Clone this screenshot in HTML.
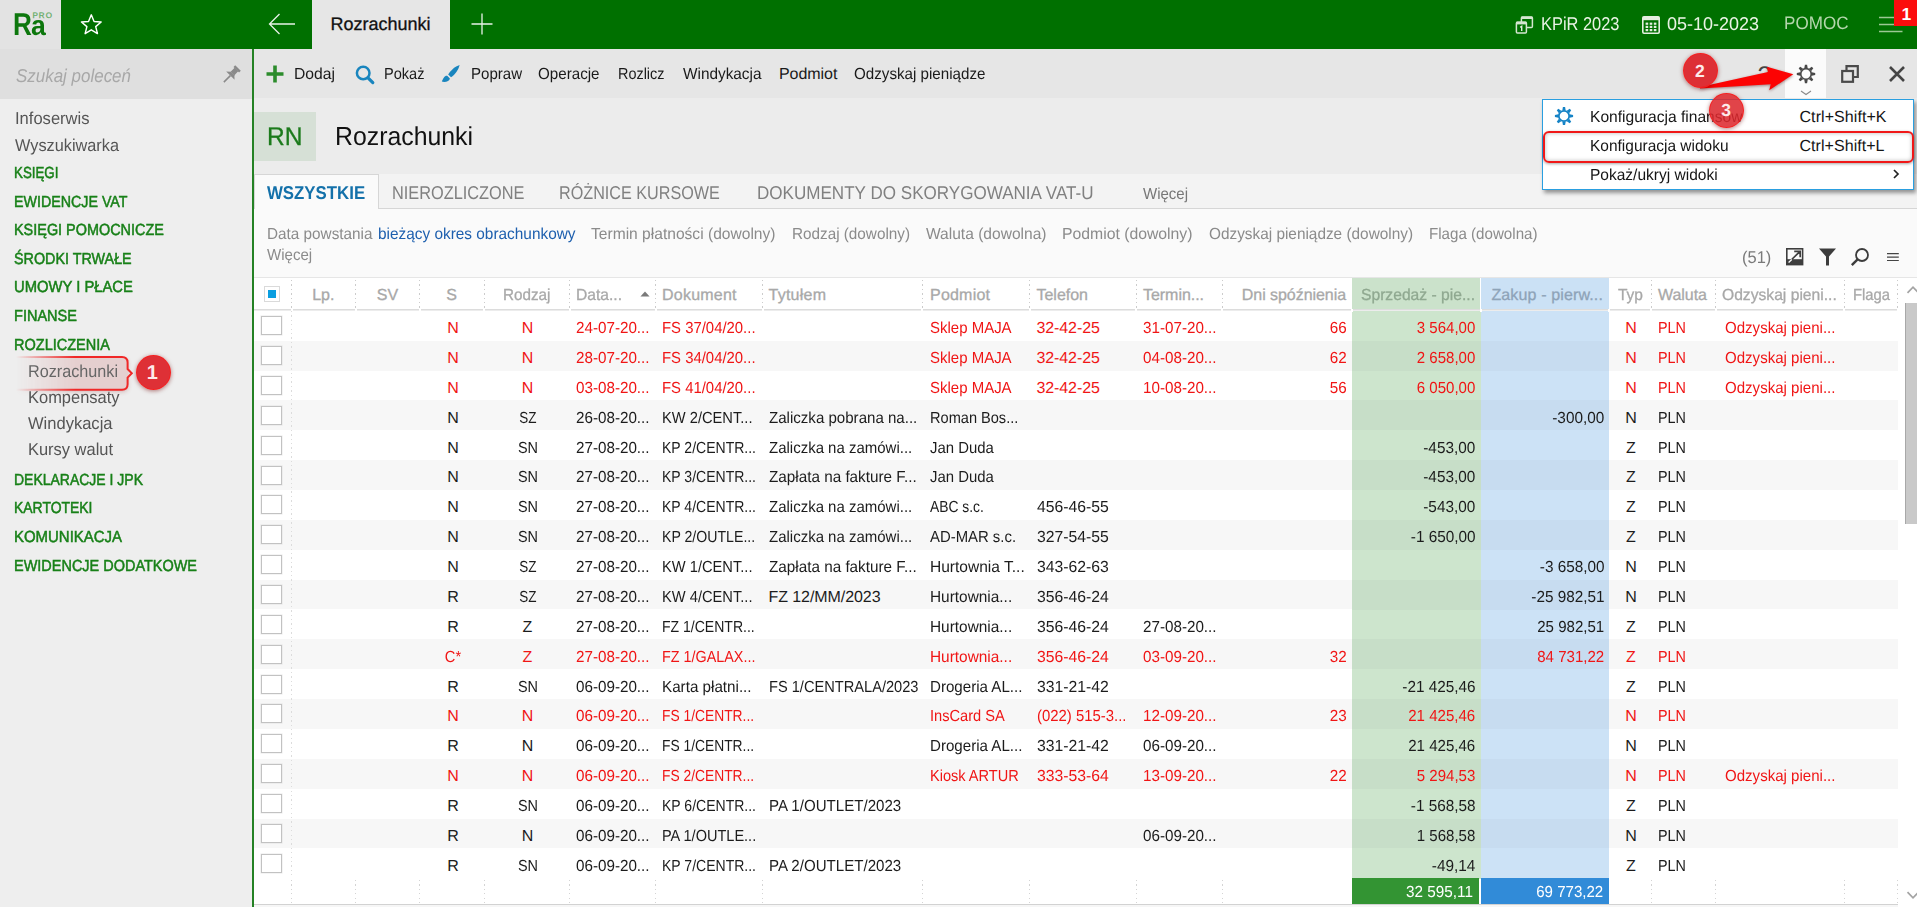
<!DOCTYPE html>
<html lang="pl"><head><meta charset="utf-8"><title>Rozrachunki</title>
<style>
html,body{margin:0;padding:0;}
body{width:1917px;height:907px;overflow:hidden;position:relative;background:#fff;font-family:"Liberation Sans", sans-serif;}
.L div{position:absolute;}
.L svg{position:absolute;overflow:visible;}
.t{position:absolute;white-space:nowrap;line-height:1;text-rendering:geometricPrecision;}
.L{position:absolute;left:0;top:0;width:1917px;height:907px;}
</style></head><body>
<div class="L">
<div style="left:0px;top:0px;width:1917px;height:49px;background:#007000;"></div>
<div style="left:0px;top:0px;width:61px;height:49px;background:#e3e3e3;"></div>
<div style="left:312px;top:0px;width:138px;height:49px;background:#e6e6e6;"></div>
<div style="left:0px;top:49px;width:252px;height:858px;background:#eeeeee;"></div>
<div style="left:0px;top:49px;width:252px;height:49.5px;background:#dfdfdf;"></div>
<div style="left:252px;top:49px;width:2px;height:858px;background:#258225;"></div>
<div style="left:254px;top:49px;width:1663px;height:49px;background:#e6e6e6;"></div>
<div style="left:254px;top:98px;width:1663px;height:76.5px;background:#ececec;"></div>
<div style="left:254px;top:112px;width:61.5px;height:48.5px;background:#d6e0d6;"></div>
<div style="left:254px;top:174px;width:1663px;height:34px;background:#f3f3f3;"></div>
<div style="left:254px;top:174px;width:123px;height:35px;background:#fafafa;border:1px solid #d6d6d6;border-bottom:none;box-sizing:content-box;"></div>
<div style="left:377.5px;top:207.5px;width:1540px;height:1.5px;background:#d6d6d6;"></div>
<div style="left:254px;top:209px;width:1663px;height:68.5px;background:#fafafa;"></div>
<div style="left:254px;top:277px;width:1663px;height:1px;background:#e6e6e6;"></div>
<div style="left:254px;top:277.5px;width:1663px;height:630px;background:#ffffff;"></div>
<svg style="left:80px;top:12.800px" width="22.600" height="22.600" viewBox="0 0 22 22"><path d="M11 1.8 L13.7 8.3 L20.6 8.8 L15.3 13.3 L17 20.1 L11 16.4 L5 20.1 L6.7 13.3 L1.4 8.8 L8.3 8.3 Z" fill="none" stroke="#fff" stroke-width="1.4" stroke-linejoin="round"/></svg>
<svg style="left:268px;top:13px" width="28" height="22" viewBox="0 0 28 22"><path d="M1.5 11 H27 M11.5 1 L1.5 11 L11.5 21" fill="none" stroke="#e8f2e8" stroke-width="1.3"/></svg>
<svg style="left:471px;top:13px" width="22" height="22" viewBox="0 0 22 22"><path d="M11 0.5 V21.5 M0.5 11 H21.5" fill="none" stroke="#e8f2e8" stroke-width="1.3"/></svg>
<svg style="left:1515px;top:16px" width="19" height="18" viewBox="0 0 19 18"><rect x="6.4" y="1.100" width="11" height="10.400" rx="1" fill="none" stroke="#d4e6d0" stroke-width="1.500"/><rect x="6.4" y="0.600" width="11" height="2.400" fill="#d4e6d0"/><rect x="1.4" y="6.2" width="10" height="10.800" rx="1" fill="#007000" stroke="#d4e6d0" stroke-width="1.500"/><rect x="1.4" y="5.600" width="10" height="2.800" fill="#d4e6d0"/><path d="M5.200 11.400 L6.700 10.300 V15" fill="none" stroke="#e4efe0" stroke-width="1.400"/></svg>
<svg style="left:1642px;top:15.5px" width="18" height="18" viewBox="0 0 18 18"><rect x="0.8" y="0.8" width="16.4" height="16.4" rx="1.2" fill="none" stroke="#e4efe0" stroke-width="1.6"/><rect x="0.8" y="0.8" width="16.4" height="3.4" fill="#e4efe0"/><g fill="#e4efe0"><rect x="3.6" y="6.6" width="2.6" height="2.2"/><rect x="7.7" y="6.6" width="2.6" height="2.2"/><rect x="11.8" y="6.6" width="2.6" height="2.2"/><rect x="3.6" y="9.8" width="2.6" height="2.2"/><rect x="7.7" y="9.8" width="2.6" height="2.2"/><rect x="11.8" y="9.8" width="2.6" height="2.2"/><rect x="3.6" y="13" width="2.6" height="2.2"/><rect x="7.7" y="13" width="2.6" height="2.2"/><rect x="11.8" y="13" width="2.6" height="2.2"/></g></svg>
<svg style="left:1878.5px;top:15px" width="24" height="18" viewBox="0 0 24 18"><path d="M0 2.5 H23.5 M0 9.5 H23.5 M0 16.5 H23.5" fill="none" stroke="#9cc894" stroke-width="1.3"/></svg>
<div style="left:1894px;top:0px;width:23px;height:26px;background:#fb0d0d;"></div>
<svg style="left:231.200px;top:75.100px" width="1" height="1" viewBox="0 0 1 1"><g transform="rotate(45) scale(1.1)" fill="#8a8a8a"><rect x="-3.6" y="-9" width="7.200" height="2.200"/><rect x="-2.3" y="-7" width="4.600" height="5.200"/><path d="M-2.3 -2 L-5.400 0.800 H5.400 L2.300 -2 Z"/><rect x="-0.700" y="0.800" width="1.400" height="8.400"/></g></svg>
<svg style="left:266px;top:64.5px" width="18" height="18" viewBox="0 0 18 18"><path d="M9 0.5 V17.5 M0.5 9 H17.5" fill="none" stroke="#2c8c2c" stroke-width="3.6"/></svg>
<svg style="left:354.5px;top:64.5px" width="20" height="19" viewBox="0 0 20 19"><circle cx="8.2" cy="8" r="6.3" fill="none" stroke="#1985be" stroke-width="2.5"/><path d="M13 12.800 L17.800 17.600" stroke="#1985be" stroke-width="3.2" stroke-linecap="round"/></svg>
<svg style="left:441px;top:64px" width="20" height="20" viewBox="0 0 20 20"><path d="M18.6 1 C14 2.5 9.5 6.5 7.2 10.6 L10 13.300 C14 10.500 17.5 6 18.6 1 Z" fill="#1985be"/><path d="M6.2 11.800 C3.2 11.600 2.6 14.2 0.8 17.600 C4.6 18.600 8.6 17 8.9 14.4 Z" fill="#1985be"/></svg>
<div style="left:1785px;top:49px;width:41px;height:49px;background:#fbfbfb;"></div>
<svg style="left:1841px;top:65px" width="18" height="18" viewBox="0 0 18 18"><path d="M5.5 5 V1.200 H16.800 V12 H12.500" fill="none" stroke="#4a4a4a" stroke-width="2.2"/><rect x="1.2" y="6" width="10.8" height="10.8" fill="none" stroke="#4a4a4a" stroke-width="2.2"/></svg>
<svg style="left:1889px;top:66px" width="16" height="16" viewBox="0 0 16 16"><path d="M1 1 L15 15 M15 1 L1 15" fill="none" stroke="#444" stroke-width="2.600"/></svg>
<svg style="left:1805.7px;top:74.2px" width="1" height="1" viewBox="0 0 1 1"><g fill="none" stroke="#484848" stroke-width="1.7"><circle cx="0" cy="0" r="5.3"/></g><g fill="#484848"><path transform="rotate(0)" d="M-1.7 -5.8 L-1.100 -9.2 L1.100 -9.2 L1.700 -5.8 Z"/><path transform="rotate(45)" d="M-1.7 -5.8 L-1.100 -9.2 L1.100 -9.2 L1.700 -5.8 Z"/><path transform="rotate(90)" d="M-1.7 -5.8 L-1.100 -9.2 L1.100 -9.2 L1.700 -5.8 Z"/><path transform="rotate(135)" d="M-1.7 -5.8 L-1.100 -9.2 L1.100 -9.2 L1.700 -5.8 Z"/><path transform="rotate(180)" d="M-1.7 -5.8 L-1.100 -9.2 L1.100 -9.2 L1.700 -5.8 Z"/><path transform="rotate(225)" d="M-1.7 -5.8 L-1.100 -9.2 L1.100 -9.2 L1.700 -5.8 Z"/><path transform="rotate(270)" d="M-1.7 -5.8 L-1.100 -9.2 L1.100 -9.2 L1.700 -5.8 Z"/><path transform="rotate(315)" d="M-1.7 -5.8 L-1.100 -9.2 L1.100 -9.2 L1.700 -5.8 Z"/></g></svg>
<svg style="left:1800px;top:90px" width="12" height="6" viewBox="0 0 12 6"><path d="M1 1 L6 4.500 L11 1" fill="none" stroke="#8a8a8a" stroke-width="1.1"/></svg>
<svg style="left:1785.800px;top:248px" width="17.400" height="17.400" viewBox="0 0 17.400 17.400"><rect x="0.8" y="0.8" width="15.800" height="15.800" fill="#fafafa" stroke="#3e3e3e" stroke-width="1.600"/><rect x="0.8" y="11.200" width="15.800" height="5.400" fill="#3e3e3e"/><path d="M5.200 12 L14 3.400 M8.200 3.300 H14.200 V9.300" fill="none" stroke="#3e3e3e" stroke-width="1.700"/><path d="M2.600 14.600 L5.800 11.600" stroke="#fafafa" stroke-width="1.300"/></svg>
<svg style="left:1818.5px;top:248px" width="17" height="18" viewBox="0 0 17 18"><path d="M0 0.5 H17 L10 8.5 V17.500 H7 V8.5 Z" fill="#3c3c3c"/></svg>
<svg style="left:1850.5px;top:247.5px" width="18" height="18" viewBox="0 0 18 18"><circle cx="11" cy="7" r="6" fill="none" stroke="#3c3c3c" stroke-width="1.800"/><path d="M6.6 11.400 L0.800 17.200" stroke="#3c3c3c" stroke-width="2.4"/></svg>
<svg style="left:1887px;top:253px" width="12" height="9" viewBox="0 0 12 9"><path d="M0 0.600 H11.800 M0 4.100 H11.800 M0 7.500 H11.800" stroke="#444" stroke-width="1.200"/></svg>
<div style="left:254px;top:340.76px;width:1643.5px;height:29.86px;background:#f7f7f7;"></div>
<div style="left:254px;top:400.48px;width:1643.5px;height:29.86px;background:#f7f7f7;"></div>
<div style="left:254px;top:460.2px;width:1643.5px;height:29.86px;background:#f7f7f7;"></div>
<div style="left:254px;top:519.92px;width:1643.5px;height:29.86px;background:#f7f7f7;"></div>
<div style="left:254px;top:579.64px;width:1643.5px;height:29.86px;background:#f7f7f7;"></div>
<div style="left:254px;top:639.36px;width:1643.5px;height:29.86px;background:#f7f7f7;"></div>
<div style="left:254px;top:699.08px;width:1643.5px;height:29.86px;background:#f7f7f7;"></div>
<div style="left:254px;top:758.8px;width:1643.5px;height:29.86px;background:#f7f7f7;"></div>
<div style="left:254px;top:818.52px;width:1643.5px;height:29.86px;background:#f7f7f7;"></div>
<div style="left:1352px;top:277.5px;width:128px;height:33.5px;background:#cbe2cb;"></div>
<div style="left:1481px;top:277.5px;width:127.5px;height:33.5px;background:#cbe1f5;"></div>
<div style="left:1352px;top:310.9px;width:128.5px;height:30.259999999999998px;background:#cde5cd;"></div>
<div style="left:1480.5px;top:310.9px;width:128.5px;height:30.259999999999998px;background:#cce2f6;"></div>
<div style="left:1352px;top:340.76px;width:128.5px;height:30.259999999999998px;background:#c7dec8;"></div>
<div style="left:1480.5px;top:340.76px;width:128.5px;height:30.259999999999998px;background:#c7dcf0;"></div>
<div style="left:1352px;top:370.62px;width:128.5px;height:30.259999999999998px;background:#cde5cd;"></div>
<div style="left:1480.5px;top:370.62px;width:128.5px;height:30.259999999999998px;background:#cce2f6;"></div>
<div style="left:1352px;top:400.48px;width:128.5px;height:30.259999999999998px;background:#c7dec8;"></div>
<div style="left:1480.5px;top:400.48px;width:128.5px;height:30.259999999999998px;background:#c7dcf0;"></div>
<div style="left:1352px;top:430.34px;width:128.5px;height:30.259999999999998px;background:#cde5cd;"></div>
<div style="left:1480.5px;top:430.34px;width:128.5px;height:30.259999999999998px;background:#cce2f6;"></div>
<div style="left:1352px;top:460.2px;width:128.5px;height:30.259999999999998px;background:#c7dec8;"></div>
<div style="left:1480.5px;top:460.2px;width:128.5px;height:30.259999999999998px;background:#c7dcf0;"></div>
<div style="left:1352px;top:490.06px;width:128.5px;height:30.259999999999998px;background:#cde5cd;"></div>
<div style="left:1480.5px;top:490.06px;width:128.5px;height:30.259999999999998px;background:#cce2f6;"></div>
<div style="left:1352px;top:519.92px;width:128.5px;height:30.259999999999998px;background:#c7dec8;"></div>
<div style="left:1480.5px;top:519.92px;width:128.5px;height:30.259999999999998px;background:#c7dcf0;"></div>
<div style="left:1352px;top:549.78px;width:128.5px;height:30.259999999999998px;background:#cde5cd;"></div>
<div style="left:1480.5px;top:549.78px;width:128.5px;height:30.259999999999998px;background:#cce2f6;"></div>
<div style="left:1352px;top:579.64px;width:128.5px;height:30.259999999999998px;background:#c7dec8;"></div>
<div style="left:1480.5px;top:579.64px;width:128.5px;height:30.259999999999998px;background:#c7dcf0;"></div>
<div style="left:1352px;top:609.5px;width:128.5px;height:30.259999999999998px;background:#cde5cd;"></div>
<div style="left:1480.5px;top:609.5px;width:128.5px;height:30.259999999999998px;background:#cce2f6;"></div>
<div style="left:1352px;top:639.36px;width:128.5px;height:30.259999999999998px;background:#c7dec8;"></div>
<div style="left:1480.5px;top:639.36px;width:128.5px;height:30.259999999999998px;background:#c7dcf0;"></div>
<div style="left:1352px;top:669.22px;width:128.5px;height:30.259999999999998px;background:#cde5cd;"></div>
<div style="left:1480.5px;top:669.22px;width:128.5px;height:30.259999999999998px;background:#cce2f6;"></div>
<div style="left:1352px;top:699.08px;width:128.5px;height:30.259999999999998px;background:#c7dec8;"></div>
<div style="left:1480.5px;top:699.08px;width:128.5px;height:30.259999999999998px;background:#c7dcf0;"></div>
<div style="left:1352px;top:728.94px;width:128.5px;height:30.259999999999998px;background:#cde5cd;"></div>
<div style="left:1480.5px;top:728.94px;width:128.5px;height:30.259999999999998px;background:#cce2f6;"></div>
<div style="left:1352px;top:758.8px;width:128.5px;height:30.259999999999998px;background:#c7dec8;"></div>
<div style="left:1480.5px;top:758.8px;width:128.5px;height:30.259999999999998px;background:#c7dcf0;"></div>
<div style="left:1352px;top:788.66px;width:128.5px;height:30.259999999999998px;background:#cde5cd;"></div>
<div style="left:1480.5px;top:788.66px;width:128.5px;height:30.259999999999998px;background:#cce2f6;"></div>
<div style="left:1352px;top:818.52px;width:128.5px;height:30.259999999999998px;background:#c7dec8;"></div>
<div style="left:1480.5px;top:818.52px;width:128.5px;height:30.259999999999998px;background:#c7dcf0;"></div>
<div style="left:1352px;top:848.38px;width:128.5px;height:30.259999999999998px;background:#cde5cd;"></div>
<div style="left:1480.5px;top:848.38px;width:128.5px;height:30.259999999999998px;background:#cce2f6;"></div>
<div style="left:254px;top:308.5px;width:1643.5px;height:1.5px;background:#dcdcdc;"></div>
<div style="left:254px;top:310px;width:1643.5px;height:1.2px;background:#ececec;"></div>
<div style="left:291px;top:280px;width:1px;height:29px;background:repeating-linear-gradient(180deg,#cccccc 0,#cccccc 1.3px,transparent 1.3px,transparent 4.4px);"></div>
<div style="left:291px;top:880px;width:1px;height:24px;background:repeating-linear-gradient(180deg,#d4d4d4 0,#d4d4d4 1.3px,transparent 1.3px,transparent 4.4px);"></div>
<div style="left:355px;top:280px;width:1px;height:29px;background:repeating-linear-gradient(180deg,#cccccc 0,#cccccc 1.3px,transparent 1.3px,transparent 4.4px);"></div>
<div style="left:355px;top:880px;width:1px;height:24px;background:repeating-linear-gradient(180deg,#d4d4d4 0,#d4d4d4 1.3px,transparent 1.3px,transparent 4.4px);"></div>
<div style="left:419px;top:280px;width:1px;height:29px;background:repeating-linear-gradient(180deg,#cccccc 0,#cccccc 1.3px,transparent 1.3px,transparent 4.4px);"></div>
<div style="left:419px;top:880px;width:1px;height:24px;background:repeating-linear-gradient(180deg,#d4d4d4 0,#d4d4d4 1.3px,transparent 1.3px,transparent 4.4px);"></div>
<div style="left:484px;top:280px;width:1px;height:29px;background:repeating-linear-gradient(180deg,#cccccc 0,#cccccc 1.3px,transparent 1.3px,transparent 4.4px);"></div>
<div style="left:484px;top:880px;width:1px;height:24px;background:repeating-linear-gradient(180deg,#d4d4d4 0,#d4d4d4 1.3px,transparent 1.3px,transparent 4.4px);"></div>
<div style="left:569px;top:280px;width:1px;height:29px;background:repeating-linear-gradient(180deg,#cccccc 0,#cccccc 1.3px,transparent 1.3px,transparent 4.4px);"></div>
<div style="left:569px;top:880px;width:1px;height:24px;background:repeating-linear-gradient(180deg,#d4d4d4 0,#d4d4d4 1.3px,transparent 1.3px,transparent 4.4px);"></div>
<div style="left:655px;top:280px;width:1px;height:29px;background:repeating-linear-gradient(180deg,#cccccc 0,#cccccc 1.3px,transparent 1.3px,transparent 4.4px);"></div>
<div style="left:655px;top:880px;width:1px;height:24px;background:repeating-linear-gradient(180deg,#d4d4d4 0,#d4d4d4 1.3px,transparent 1.3px,transparent 4.4px);"></div>
<div style="left:762px;top:280px;width:1px;height:29px;background:repeating-linear-gradient(180deg,#cccccc 0,#cccccc 1.3px,transparent 1.3px,transparent 4.4px);"></div>
<div style="left:762px;top:880px;width:1px;height:24px;background:repeating-linear-gradient(180deg,#d4d4d4 0,#d4d4d4 1.3px,transparent 1.3px,transparent 4.4px);"></div>
<div style="left:922px;top:280px;width:1px;height:29px;background:repeating-linear-gradient(180deg,#cccccc 0,#cccccc 1.3px,transparent 1.3px,transparent 4.4px);"></div>
<div style="left:922px;top:880px;width:1px;height:24px;background:repeating-linear-gradient(180deg,#d4d4d4 0,#d4d4d4 1.3px,transparent 1.3px,transparent 4.4px);"></div>
<div style="left:1029px;top:280px;width:1px;height:29px;background:repeating-linear-gradient(180deg,#cccccc 0,#cccccc 1.3px,transparent 1.3px,transparent 4.4px);"></div>
<div style="left:1029px;top:880px;width:1px;height:24px;background:repeating-linear-gradient(180deg,#d4d4d4 0,#d4d4d4 1.3px,transparent 1.3px,transparent 4.4px);"></div>
<div style="left:1136px;top:280px;width:1px;height:29px;background:repeating-linear-gradient(180deg,#cccccc 0,#cccccc 1.3px,transparent 1.3px,transparent 4.4px);"></div>
<div style="left:1136px;top:880px;width:1px;height:24px;background:repeating-linear-gradient(180deg,#d4d4d4 0,#d4d4d4 1.3px,transparent 1.3px,transparent 4.4px);"></div>
<div style="left:1222px;top:280px;width:1px;height:29px;background:repeating-linear-gradient(180deg,#cccccc 0,#cccccc 1.3px,transparent 1.3px,transparent 4.4px);"></div>
<div style="left:1222px;top:880px;width:1px;height:24px;background:repeating-linear-gradient(180deg,#d4d4d4 0,#d4d4d4 1.3px,transparent 1.3px,transparent 4.4px);"></div>
<div style="left:1651px;top:280px;width:1px;height:29px;background:repeating-linear-gradient(180deg,#cccccc 0,#cccccc 1.3px,transparent 1.3px,transparent 4.4px);"></div>
<div style="left:1651px;top:880px;width:1px;height:24px;background:repeating-linear-gradient(180deg,#d4d4d4 0,#d4d4d4 1.3px,transparent 1.3px,transparent 4.4px);"></div>
<div style="left:1715px;top:280px;width:1px;height:29px;background:repeating-linear-gradient(180deg,#cccccc 0,#cccccc 1.3px,transparent 1.3px,transparent 4.4px);"></div>
<div style="left:1715px;top:880px;width:1px;height:24px;background:repeating-linear-gradient(180deg,#d4d4d4 0,#d4d4d4 1.3px,transparent 1.3px,transparent 4.4px);"></div>
<div style="left:1844px;top:280px;width:1px;height:29px;background:repeating-linear-gradient(180deg,#cccccc 0,#cccccc 1.3px,transparent 1.3px,transparent 4.4px);"></div>
<div style="left:1844px;top:880px;width:1px;height:24px;background:repeating-linear-gradient(180deg,#d4d4d4 0,#d4d4d4 1.3px,transparent 1.3px,transparent 4.4px);"></div>
<div style="left:1897px;top:280px;width:1px;height:29px;background:repeating-linear-gradient(180deg,#cccccc 0,#cccccc 1.3px,transparent 1.3px,transparent 4.4px);"></div>
<div style="left:1897px;top:880px;width:1px;height:24px;background:repeating-linear-gradient(180deg,#d4d4d4 0,#d4d4d4 1.3px,transparent 1.3px,transparent 4.4px);"></div>
<div style="left:290.7px;top:308.5px;width:2px;height:3px;background:#ffffff;"></div>
<div style="left:354.5px;top:308.5px;width:2px;height:3px;background:#ffffff;"></div>
<div style="left:418.6px;top:308.5px;width:2px;height:3px;background:#ffffff;"></div>
<div style="left:483.4px;top:308.5px;width:2px;height:3px;background:#ffffff;"></div>
<div style="left:568.9px;top:308.5px;width:2px;height:3px;background:#ffffff;"></div>
<div style="left:654.7px;top:308.5px;width:2px;height:3px;background:#ffffff;"></div>
<div style="left:761.5px;top:308.5px;width:2px;height:3px;background:#ffffff;"></div>
<div style="left:921.3px;top:308.5px;width:2px;height:3px;background:#ffffff;"></div>
<div style="left:1028.5px;top:308.5px;width:2px;height:3px;background:#ffffff;"></div>
<div style="left:1135.3px;top:308.5px;width:2px;height:3px;background:#ffffff;"></div>
<div style="left:1221.3px;top:308.5px;width:2px;height:3px;background:#ffffff;"></div>
<div style="left:1650.3px;top:308.5px;width:2px;height:3px;background:#ffffff;"></div>
<div style="left:1714.5px;top:308.5px;width:2px;height:3px;background:#ffffff;"></div>
<div style="left:1843px;top:308.5px;width:2px;height:3px;background:#ffffff;"></div>
<div style="left:1896.5px;top:308.5px;width:2px;height:3px;background:#ffffff;"></div>
<div style="left:1351px;top:308.5px;width:2px;height:3px;background:#ffffff;"></div>
<div style="left:1479.5px;top:308.5px;width:2px;height:3px;background:#ffffff;"></div>
<div style="left:1607.5px;top:308.5px;width:2px;height:3px;background:#ffffff;"></div>
<div style="left:291px;top:311px;width:1px;height:568px;background:repeating-linear-gradient(180deg,#dcdcdc 0,#dcdcdc 1.3px,transparent 1.3px,transparent 4.4px);"></div>
<div style="left:264px;top:286px;width:14px;height:14px;border:1px solid #dadada;background:#fff;"></div>
<div style="left:268px;top:290px;width:8px;height:8px;background:#0a9ee0;"></div>
<div style="left:261px;top:316px;width:19px;height:17px;border:1px solid #c2c2c2;background:#fff;box-shadow:0 0 0 0.5px rgba(190,190,190,0.35);"></div>
<div style="left:261px;top:346px;width:19px;height:17px;border:1px solid #c2c2c2;background:#fff;box-shadow:0 0 0 0.5px rgba(190,190,190,0.35);"></div>
<div style="left:261px;top:376px;width:19px;height:17px;border:1px solid #c2c2c2;background:#fff;box-shadow:0 0 0 0.5px rgba(190,190,190,0.35);"></div>
<div style="left:261px;top:406px;width:19px;height:17px;border:1px solid #c2c2c2;background:#fff;box-shadow:0 0 0 0.5px rgba(190,190,190,0.35);"></div>
<div style="left:261px;top:436px;width:19px;height:17px;border:1px solid #c2c2c2;background:#fff;box-shadow:0 0 0 0.5px rgba(190,190,190,0.35);"></div>
<div style="left:261px;top:466px;width:19px;height:17px;border:1px solid #c2c2c2;background:#fff;box-shadow:0 0 0 0.5px rgba(190,190,190,0.35);"></div>
<div style="left:261px;top:495px;width:19px;height:17px;border:1px solid #c2c2c2;background:#fff;box-shadow:0 0 0 0.5px rgba(190,190,190,0.35);"></div>
<div style="left:261px;top:525px;width:19px;height:17px;border:1px solid #c2c2c2;background:#fff;box-shadow:0 0 0 0.5px rgba(190,190,190,0.35);"></div>
<div style="left:261px;top:555px;width:19px;height:17px;border:1px solid #c2c2c2;background:#fff;box-shadow:0 0 0 0.5px rgba(190,190,190,0.35);"></div>
<div style="left:261px;top:585px;width:19px;height:17px;border:1px solid #c2c2c2;background:#fff;box-shadow:0 0 0 0.5px rgba(190,190,190,0.35);"></div>
<div style="left:261px;top:615px;width:19px;height:17px;border:1px solid #c2c2c2;background:#fff;box-shadow:0 0 0 0.5px rgba(190,190,190,0.35);"></div>
<div style="left:261px;top:645px;width:19px;height:17px;border:1px solid #c2c2c2;background:#fff;box-shadow:0 0 0 0.5px rgba(190,190,190,0.35);"></div>
<div style="left:261px;top:675px;width:19px;height:17px;border:1px solid #c2c2c2;background:#fff;box-shadow:0 0 0 0.5px rgba(190,190,190,0.35);"></div>
<div style="left:261px;top:704px;width:19px;height:17px;border:1px solid #c2c2c2;background:#fff;box-shadow:0 0 0 0.5px rgba(190,190,190,0.35);"></div>
<div style="left:261px;top:734px;width:19px;height:17px;border:1px solid #c2c2c2;background:#fff;box-shadow:0 0 0 0.5px rgba(190,190,190,0.35);"></div>
<div style="left:261px;top:764px;width:19px;height:17px;border:1px solid #c2c2c2;background:#fff;box-shadow:0 0 0 0.5px rgba(190,190,190,0.35);"></div>
<div style="left:261px;top:794px;width:19px;height:17px;border:1px solid #c2c2c2;background:#fff;box-shadow:0 0 0 0.5px rgba(190,190,190,0.35);"></div>
<div style="left:261px;top:824px;width:19px;height:17px;border:1px solid #c2c2c2;background:#fff;box-shadow:0 0 0 0.5px rgba(190,190,190,0.35);"></div>
<div style="left:261px;top:854px;width:19px;height:17px;border:1px solid #c2c2c2;background:#fff;box-shadow:0 0 0 0.5px rgba(190,190,190,0.35);"></div>
<svg style="left:640px;top:291px" width="10" height="5.5" viewBox="0 0 10 6"><path d="M0 6 L5 0.5 L10 6 Z" fill="#7a7a7a"/></svg>
<div style="left:1352px;top:878px;width:127px;height:27px;background:#339433;"></div>
<div style="left:1481px;top:878px;width:127.5px;height:27px;background:#318bd8;"></div>
<div style="left:254px;top:904px;width:1643.5px;height:1px;background:#d2d2d2;"></div>
<div style="left:254px;top:905px;width:1643.5px;height:2px;background:#f6f6f6;"></div>
<div style="left:1899px;top:277.5px;width:18px;height:630px;background:#ffffff;"></div>
<div style="left:1905px;top:302.5px;width:12px;height:221.5px;background:#c9c9c9;border-left:1px solid #a8a8a8;"></div>
<svg style="left:1906.500px;top:285.500px" width="12" height="8" viewBox="0 0 12 8"><path d="M0.5 6.800 L6 1.200 L11.500 6.800" fill="none" stroke="#a4a4a4" stroke-width="1.700"/></svg>
<svg style="left:1906.800px;top:890.500px" width="12" height="8" viewBox="0 0 12 8"><path d="M0.5 1.200 L6 6.800 L11.500 1.200" fill="none" stroke="#a4a4a4" stroke-width="1.700"/></svg>
</div>
<div class="L">
<span class="t" style="font-size:31.5px;font-weight:700;color:#0d770d;top:9px;transform:scaleX(0.83);transform-origin:0 0;left:12.90px;">R</span>
<span class="t" style="font-size:28px;font-weight:700;color:#0d770d;top:12px;transform:scaleX(0.95);transform-origin:0 0;left:31.40px;">a</span>
<span class="t" style="font-size:8px;font-weight:400;letter-spacing:1.128px;color:#62aa62;top:12px;-webkit-text-stroke:0.25px #62aa62;left:32.40px;">PRO</span>
<span class="t" style="font-size:18px;font-weight:400;letter-spacing:-0.005px;color:#111;top:15px;-webkit-text-stroke:0.3px #111;left:330.60px;">Rozrachunki</span>
<span class="t" style="font-size:18.5px;font-weight:400;color:#e9f3e4;top:15px;transform:scaleX(0.8875);transform-origin:0 0;left:1541.00px;">KPiR 2023</span>
<span class="t" style="font-size:18.5px;font-weight:400;color:#e9f3e4;top:15px;transform:scaleX(0.9721);transform-origin:0 0;left:1666.60px;">05-10-2023</span>
<span class="t" style="font-size:18px;font-weight:400;color:#b4d6ac;top:14px;transform:scaleX(0.9483);transform-origin:0 0;left:1783.60px;">POMOC</span>
<span class="t" style="font-size:17.5px;font-weight:700;color:#fff;top:6px;left:1406.30px;width:1000px;text-align:center;">1</span>
<span class="t" style="font-size:18.5px;font-weight:400;font-style:italic;color:#a8a8a8;top:67px;transform:scaleX(0.9164);transform-origin:0 0;left:15.60px;">Szukaj poleceń</span>
<span class="t" style="font-size:17.25px;font-weight:400;color:#555;top:110px;transform:scaleX(0.9594);transform-origin:0 0;left:14.70px;">Infoserwis</span>
<span class="t" style="font-size:17.25px;font-weight:400;color:#555;top:137px;transform:scaleX(0.9448);transform-origin:0 0;left:14.70px;">Wyszukiwarka</span>
<span class="t" style="font-size:16px;font-weight:400;color:#188018;top:166px;-webkit-text-stroke:0.5px #188018;transform:scaleX(0.8321);transform-origin:0 0;left:14.30px;">KSIĘGI</span>
<span class="t" style="font-size:16px;font-weight:400;color:#188018;top:195px;-webkit-text-stroke:0.5px #188018;transform:scaleX(0.8907);transform-origin:0 0;left:14.30px;">EWIDENCJE VAT</span>
<span class="t" style="font-size:16px;font-weight:400;color:#188018;top:223px;-webkit-text-stroke:0.5px #188018;transform:scaleX(0.9017);transform-origin:0 0;left:14.30px;">KSIĘGI POMOCNICZE</span>
<span class="t" style="font-size:16px;font-weight:400;color:#188018;top:252px;-webkit-text-stroke:0.5px #188018;transform:scaleX(0.8964);transform-origin:0 0;left:14.30px;">ŚRODKI TRWAŁE</span>
<span class="t" style="font-size:16px;font-weight:400;color:#188018;top:280px;-webkit-text-stroke:0.5px #188018;transform:scaleX(0.9244);transform-origin:0 0;left:14.30px;">UMOWY I PŁACE</span>
<span class="t" style="font-size:16px;font-weight:400;color:#188018;top:309px;-webkit-text-stroke:0.5px #188018;transform:scaleX(0.9085);transform-origin:0 0;left:14.30px;">FINANSE</span>
<span class="t" style="font-size:16px;font-weight:400;color:#188018;top:338px;-webkit-text-stroke:0.5px #188018;transform:scaleX(0.9074);transform-origin:0 0;left:14.30px;">ROZLICZENIA</span>
<span class="t" style="font-size:17.25px;font-weight:400;color:#555;top:389px;transform:scaleX(0.9542);transform-origin:0 0;left:27.70px;">Kompensaty</span>
<span class="t" style="font-size:17.25px;font-weight:400;color:#555;top:415px;transform:scaleX(0.958);transform-origin:0 0;left:27.70px;">Windykacja</span>
<span class="t" style="font-size:17.25px;font-weight:400;color:#555;top:441px;transform:scaleX(0.9534);transform-origin:0 0;left:27.70px;">Kursy walut</span>
<span class="t" style="font-size:16px;font-weight:400;color:#188018;top:473px;-webkit-text-stroke:0.5px #188018;transform:scaleX(0.8739);transform-origin:0 0;left:14.30px;">DEKLARACJE I JPK</span>
<span class="t" style="font-size:16px;font-weight:400;color:#188018;top:501px;-webkit-text-stroke:0.5px #188018;transform:scaleX(0.8712);transform-origin:0 0;left:14.30px;">KARTOTEKI</span>
<span class="t" style="font-size:16px;font-weight:400;color:#188018;top:530px;-webkit-text-stroke:0.5px #188018;transform:scaleX(0.9344);transform-origin:0 0;left:14.30px;">KOMUNIKACJA</span>
<span class="t" style="font-size:16px;font-weight:400;color:#188018;top:559px;-webkit-text-stroke:0.5px #188018;transform:scaleX(0.9043);transform-origin:0 0;left:14.30px;">EWIDENCJE DODATKOWE</span>
<span class="t" style="font-size:16px;font-weight:400;color:#1a1a1a;top:67px;transform:scaleX(0.9806);transform-origin:0 0;left:294.20px;">Dodaj</span>
<span class="t" style="font-size:16px;font-weight:400;color:#1a1a1a;top:67px;transform:scaleX(0.9108);transform-origin:0 0;left:384.00px;">Pokaż</span>
<span class="t" style="font-size:16px;font-weight:400;color:#1a1a1a;top:67px;transform:scaleX(0.9401);transform-origin:0 0;left:471.00px;">Popraw</span>
<span class="t" style="font-size:16px;font-weight:400;color:#1a1a1a;top:67px;transform:scaleX(0.9473);transform-origin:0 0;left:538.20px;">Operacje</span>
<span class="t" style="font-size:16px;font-weight:400;color:#1a1a1a;top:67px;transform:scaleX(0.9018);transform-origin:0 0;left:618.00px;">Rozlicz</span>
<span class="t" style="font-size:16px;font-weight:400;color:#1a1a1a;top:67px;transform:scaleX(0.9595);transform-origin:0 0;left:682.70px;">Windykacja</span>
<span class="t" style="font-size:16px;font-weight:400;letter-spacing:-0.034px;color:#1a1a1a;top:67px;left:778.90px;">Podmiot</span>
<span class="t" style="font-size:16px;font-weight:400;color:#1a1a1a;top:67px;transform:scaleX(0.9477);transform-origin:0 0;left:854.40px;">Odzyskaj pieniądze</span>
<span class="t" style="font-size:24px;font-weight:400;color:#444;top:64px;left:1264.50px;width:1000px;text-align:center;">?</span>
<span class="t" style="font-size:25.5px;font-weight:400;color:#1b7a1b;top:125px;-webkit-text-stroke:0.3px #1b7a1b;transform:scaleX(0.9635);transform-origin:0 0;left:267.00px;">RN</span>
<span class="t" style="font-size:26px;font-weight:400;color:#111;top:123px;transform:scaleX(0.9549);transform-origin:0 0;left:334.90px;">Rozrachunki</span>
<span class="t" style="font-size:18.5px;font-weight:700;color:#1471aa;top:184px;transform:scaleX(0.909);transform-origin:0 0;left:266.60px;">WSZYSTKIE</span>
<span class="t" style="font-size:18.5px;font-weight:400;color:#808080;top:184px;transform:scaleX(0.8829);transform-origin:0 0;left:391.70px;">NIEROZLICZONE</span>
<span class="t" style="font-size:18.5px;font-weight:400;color:#808080;top:184px;transform:scaleX(0.874);transform-origin:0 0;left:559.30px;">RÓŻNICE KURSOWE</span>
<span class="t" style="font-size:18.5px;font-weight:400;color:#808080;top:184px;transform:scaleX(0.9221);transform-origin:0 0;left:756.60px;">DOKUMENTY DO SKORYGOWANIA VAT-U</span>
<span class="t" style="font-size:16px;font-weight:400;color:#777;top:187px;transform:scaleX(0.9372);transform-origin:0 0;left:1143.20px;">Więcej</span>
<span class="t" style="font-size:16px;font-weight:400;color:#8b8b8b;top:227px;transform:scaleX(0.9565);transform-origin:0 0;left:267.00px;">Data powstania</span>
<span class="t" style="font-size:16px;font-weight:400;color:#1d5fae;top:227px;transform:scaleX(0.9614);transform-origin:0 0;left:377.60px;">bieżący okres obrachunkowy</span>
<span class="t" style="font-size:16px;font-weight:400;color:#8b8b8b;top:227px;transform:scaleX(0.9741);transform-origin:0 0;left:591.00px;">Termin płatności (dowolny)</span>
<span class="t" style="font-size:16px;font-weight:400;color:#8b8b8b;top:227px;transform:scaleX(0.9546);transform-origin:0 0;left:791.90px;">Rodzaj (dowolny)</span>
<span class="t" style="font-size:16px;font-weight:400;color:#8b8b8b;top:227px;transform:scaleX(0.9725);transform-origin:0 0;left:925.80px;">Waluta (dowolna)</span>
<span class="t" style="font-size:16px;font-weight:400;color:#8b8b8b;top:227px;transform:scaleX(0.9849);transform-origin:0 0;left:1062.40px;">Podmiot (dowolny)</span>
<span class="t" style="font-size:16px;font-weight:400;color:#8b8b8b;top:227px;transform:scaleX(0.9598);transform-origin:0 0;left:1209.30px;">Odzyskaj pieniądze (dowolny)</span>
<span class="t" style="font-size:16px;font-weight:400;color:#8b8b8b;top:227px;transform:scaleX(0.9457);transform-origin:0 0;left:1428.90px;">Flaga (dowolna)</span>
<span class="t" style="font-size:16px;font-weight:400;color:#8b8b8b;top:248px;transform:scaleX(0.9414);transform-origin:0 0;left:266.60px;">Więcej</span>
<span class="t" style="font-size:17px;font-weight:400;color:#7a7a7a;top:249px;transform:scaleX(0.9691);transform-origin:0 0;left:1742.40px;">(51)</span>
<span class="t" style="font-size:16px;font-weight:400;color:#a8a8a8;top:288px;-webkit-text-stroke:0.3px #a8a8a8;left:-176.70px;width:1000px;text-align:center;">Lp.</span>
<span class="t" style="font-size:16px;font-weight:400;color:#a8a8a8;top:288px;-webkit-text-stroke:0.3px #a8a8a8;left:-112.50px;width:1000px;text-align:center;">SV</span>
<span class="t" style="font-size:16px;font-weight:400;color:#a8a8a8;top:288px;-webkit-text-stroke:0.3px #a8a8a8;left:-48.50px;width:1000px;text-align:center;">S</span>
<span class="t" style="font-size:16px;font-weight:400;color:#a8a8a8;top:288px;-webkit-text-stroke:0.3px #a8a8a8;transform:scaleX(0.9536);transform-origin:0 0;left:503.30px;">Rodzaj</span>
<span class="t" style="font-size:16px;font-weight:400;color:#a8a8a8;top:288px;-webkit-text-stroke:0.3px #a8a8a8;transform:scaleX(0.9758);transform-origin:0 0;left:576.00px;">Data...</span>
<span class="t" style="font-size:16px;font-weight:400;letter-spacing:0.225px;color:#a8a8a8;top:288px;-webkit-text-stroke:0.3px #a8a8a8;left:662.00px;">Dokument</span>
<span class="t" style="font-size:16px;font-weight:400;letter-spacing:0.247px;color:#a8a8a8;top:288px;-webkit-text-stroke:0.3px #a8a8a8;left:768.50px;">Tytułem</span>
<span class="t" style="font-size:16px;font-weight:400;letter-spacing:0.216px;color:#a8a8a8;top:288px;-webkit-text-stroke:0.3px #a8a8a8;left:930.00px;">Podmiot</span>
<span class="t" style="font-size:16px;font-weight:400;letter-spacing:-0.016px;color:#a8a8a8;top:288px;-webkit-text-stroke:0.3px #a8a8a8;left:1036.50px;">Telefon</span>
<span class="t" style="font-size:16px;font-weight:400;letter-spacing:-0.043px;color:#a8a8a8;top:288px;-webkit-text-stroke:0.3px #a8a8a8;left:1143.00px;">Termin...</span>
<span class="t" style="font-size:16px;font-weight:400;letter-spacing:-0.050px;color:#a8a8a8;top:288px;-webkit-text-stroke:0.3px #a8a8a8;left:1241.80px;">Dni spóźnienia</span>
<span class="t" style="font-size:16px;font-weight:400;color:#8fa890;top:288px;-webkit-text-stroke:0.3px #8fa890;transform:scaleX(0.9785);transform-origin:0 0;left:1361.00px;">Sprzedaż - pie...</span>
<span class="t" style="font-size:16px;font-weight:400;letter-spacing:0.142px;color:#8ea3b8;top:288px;-webkit-text-stroke:0.3px #8ea3b8;left:1491.40px;">Zakup - pierw...</span>
<span class="t" style="font-size:16px;font-weight:400;color:#a8a8a8;top:288px;-webkit-text-stroke:0.3px #a8a8a8;transform:scaleX(0.9691);transform-origin:0 0;left:1617.60px;">Typ</span>
<span class="t" style="font-size:16px;font-weight:400;letter-spacing:-0.041px;color:#a8a8a8;top:288px;-webkit-text-stroke:0.3px #a8a8a8;left:1658.00px;">Waluta</span>
<span class="t" style="font-size:16px;font-weight:400;color:#a8a8a8;top:288px;-webkit-text-stroke:0.3px #a8a8a8;transform:scaleX(0.9779);transform-origin:0 0;left:1721.70px;">Odzyskaj pieni...</span>
<span class="t" style="font-size:16px;font-weight:400;color:#a8a8a8;top:288px;-webkit-text-stroke:0.3px #a8a8a8;transform:scaleX(0.9243);transform-origin:0 0;left:1853.00px;">Flaga</span>
<span class="t" style="font-size:16px;font-weight:400;color:#f01515;top:321px;left:-47.00px;width:1000px;text-align:center;">N</span>
<span class="t" style="font-size:16px;font-weight:400;color:#f01515;top:321px;left:27.50px;width:1000px;text-align:center;">N</span>
<span class="t" style="font-size:16px;font-weight:400;color:#f01515;top:321px;transform:scaleX(0.9503);transform-origin:0 0;left:576.00px;">24-07-20...</span>
<span class="t" style="font-size:16px;font-weight:400;color:#f01515;top:321px;transform:scaleX(0.9304);transform-origin:0 0;left:662.00px;">FS 37/04/20...</span>
<span class="t" style="font-size:16px;font-weight:400;color:#f01515;top:321px;transform:scaleX(0.9366);transform-origin:0 0;left:929.60px;">Sklep MAJA</span>
<span class="t" style="font-size:16px;font-weight:400;letter-spacing:-0.101px;color:#f01515;top:321px;left:1036.50px;">32-42-25</span>
<span class="t" style="font-size:16px;font-weight:400;color:#f01515;top:321px;transform:scaleX(0.9503);transform-origin:0 0;left:1143.00px;">31-07-20...</span>
<span class="t" style="font-size:16px;font-weight:400;color:#f01515;top:321px;transform:scaleX(0.9511);transform-origin:100% 0;right:570.50px;">66</span>
<span class="t" style="font-size:16px;font-weight:400;color:#f01515;top:321px;transform:scaleX(0.939);transform-origin:100% 0;right:441.70px;">3 564,00</span>
<span class="t" style="font-size:16px;font-weight:400;color:#f01515;top:321px;left:1131.00px;width:1000px;text-align:center;">N</span>
<span class="t" style="font-size:16px;font-weight:400;color:#f01515;top:321px;transform:scaleX(0.8973);transform-origin:0 0;left:1658.00px;">PLN</span>
<span class="t" style="font-size:16px;font-weight:400;color:#f01515;top:321px;transform:scaleX(0.9407);transform-origin:0 0;left:1725.00px;">Odzyskaj pieni...</span>
<span class="t" style="font-size:16px;font-weight:400;color:#f01515;top:351px;left:-47.00px;width:1000px;text-align:center;">N</span>
<span class="t" style="font-size:16px;font-weight:400;color:#f01515;top:351px;left:27.50px;width:1000px;text-align:center;">N</span>
<span class="t" style="font-size:16px;font-weight:400;color:#f01515;top:351px;transform:scaleX(0.9503);transform-origin:0 0;left:576.00px;">28-07-20...</span>
<span class="t" style="font-size:16px;font-weight:400;color:#f01515;top:351px;transform:scaleX(0.9304);transform-origin:0 0;left:662.00px;">FS 34/04/20...</span>
<span class="t" style="font-size:16px;font-weight:400;color:#f01515;top:351px;transform:scaleX(0.9366);transform-origin:0 0;left:929.60px;">Sklep MAJA</span>
<span class="t" style="font-size:16px;font-weight:400;letter-spacing:-0.101px;color:#f01515;top:351px;left:1036.50px;">32-42-25</span>
<span class="t" style="font-size:16px;font-weight:400;color:#f01515;top:351px;transform:scaleX(0.9503);transform-origin:0 0;left:1143.00px;">04-08-20...</span>
<span class="t" style="font-size:16px;font-weight:400;color:#f01515;top:351px;transform:scaleX(0.9511);transform-origin:100% 0;right:570.50px;">62</span>
<span class="t" style="font-size:16px;font-weight:400;color:#f01515;top:351px;transform:scaleX(0.939);transform-origin:100% 0;right:441.70px;">2 658,00</span>
<span class="t" style="font-size:16px;font-weight:400;color:#f01515;top:351px;left:1131.00px;width:1000px;text-align:center;">N</span>
<span class="t" style="font-size:16px;font-weight:400;color:#f01515;top:351px;transform:scaleX(0.8973);transform-origin:0 0;left:1658.00px;">PLN</span>
<span class="t" style="font-size:16px;font-weight:400;color:#f01515;top:351px;transform:scaleX(0.9407);transform-origin:0 0;left:1725.00px;">Odzyskaj pieni...</span>
<span class="t" style="font-size:16px;font-weight:400;color:#f01515;top:381px;left:-47.00px;width:1000px;text-align:center;">N</span>
<span class="t" style="font-size:16px;font-weight:400;color:#f01515;top:381px;left:27.50px;width:1000px;text-align:center;">N</span>
<span class="t" style="font-size:16px;font-weight:400;color:#f01515;top:381px;transform:scaleX(0.9503);transform-origin:0 0;left:576.00px;">03-08-20...</span>
<span class="t" style="font-size:16px;font-weight:400;color:#f01515;top:381px;transform:scaleX(0.9304);transform-origin:0 0;left:662.00px;">FS 41/04/20...</span>
<span class="t" style="font-size:16px;font-weight:400;color:#f01515;top:381px;transform:scaleX(0.9366);transform-origin:0 0;left:929.60px;">Sklep MAJA</span>
<span class="t" style="font-size:16px;font-weight:400;letter-spacing:-0.101px;color:#f01515;top:381px;left:1036.50px;">32-42-25</span>
<span class="t" style="font-size:16px;font-weight:400;color:#f01515;top:381px;transform:scaleX(0.9503);transform-origin:0 0;left:1143.00px;">10-08-20...</span>
<span class="t" style="font-size:16px;font-weight:400;color:#f01515;top:381px;transform:scaleX(0.9511);transform-origin:100% 0;right:570.50px;">56</span>
<span class="t" style="font-size:16px;font-weight:400;color:#f01515;top:381px;transform:scaleX(0.939);transform-origin:100% 0;right:441.70px;">6 050,00</span>
<span class="t" style="font-size:16px;font-weight:400;color:#f01515;top:381px;left:1131.00px;width:1000px;text-align:center;">N</span>
<span class="t" style="font-size:16px;font-weight:400;color:#f01515;top:381px;transform:scaleX(0.8973);transform-origin:0 0;left:1658.00px;">PLN</span>
<span class="t" style="font-size:16px;font-weight:400;color:#f01515;top:381px;transform:scaleX(0.9407);transform-origin:0 0;left:1725.00px;">Odzyskaj pieni...</span>
<span class="t" style="font-size:16px;font-weight:400;color:#1c1c1c;top:411px;left:-47.00px;width:1000px;text-align:center;">N</span>
<span class="t" style="font-size:16px;font-weight:400;color:#1c1c1c;top:411px;transform:scaleX(0.8452);transform-origin:50% 0;left:27.50px;width:1000px;text-align:center;">SZ</span>
<span class="t" style="font-size:16px;font-weight:400;color:#1c1c1c;top:411px;transform:scaleX(0.9503);transform-origin:0 0;left:576.00px;">26-08-20...</span>
<span class="t" style="font-size:16px;font-weight:400;color:#1c1c1c;top:411px;transform:scaleX(0.9173);transform-origin:0 0;left:662.00px;">KW 2/CENT...</span>
<span class="t" style="font-size:16px;font-weight:400;color:#1c1c1c;top:411px;transform:scaleX(0.9421);transform-origin:0 0;left:768.50px;">Zaliczka pobrana na...</span>
<span class="t" style="font-size:16px;font-weight:400;color:#1c1c1c;top:411px;transform:scaleX(0.9111);transform-origin:0 0;left:929.60px;">Roman Bos...</span>
<span class="t" style="font-size:16px;font-weight:400;color:#1c1c1c;top:411px;transform:scaleX(0.9582);transform-origin:100% 0;right:312.80px;">-300,00</span>
<span class="t" style="font-size:16px;font-weight:400;color:#1c1c1c;top:411px;left:1131.00px;width:1000px;text-align:center;">N</span>
<span class="t" style="font-size:16px;font-weight:400;color:#1c1c1c;top:411px;transform:scaleX(0.8973);transform-origin:0 0;left:1658.00px;">PLN</span>
<span class="t" style="font-size:16px;font-weight:400;color:#1c1c1c;top:441px;left:-47.00px;width:1000px;text-align:center;">N</span>
<span class="t" style="font-size:16px;font-weight:400;color:#1c1c1c;top:441px;transform:scaleX(0.903);transform-origin:50% 0;left:27.50px;width:1000px;text-align:center;">SN</span>
<span class="t" style="font-size:16px;font-weight:400;color:#1c1c1c;top:441px;transform:scaleX(0.9503);transform-origin:0 0;left:576.00px;">27-08-20...</span>
<span class="t" style="font-size:16px;font-weight:400;color:#1c1c1c;top:441px;transform:scaleX(0.8762);transform-origin:0 0;left:662.00px;">KP 2/CENTR...</span>
<span class="t" style="font-size:16px;font-weight:400;color:#1c1c1c;top:441px;transform:scaleX(0.9366);transform-origin:0 0;left:768.50px;">Zaliczka na zamówi...</span>
<span class="t" style="font-size:16px;font-weight:400;color:#1c1c1c;top:441px;transform:scaleX(0.9321);transform-origin:0 0;left:929.60px;">Jan Duda</span>
<span class="t" style="font-size:16px;font-weight:400;color:#1c1c1c;top:441px;transform:scaleX(0.9582);transform-origin:100% 0;right:441.70px;">-453,00</span>
<span class="t" style="font-size:16px;font-weight:400;color:#1c1c1c;top:441px;left:1131.00px;width:1000px;text-align:center;">Z</span>
<span class="t" style="font-size:16px;font-weight:400;color:#1c1c1c;top:441px;transform:scaleX(0.8973);transform-origin:0 0;left:1658.00px;">PLN</span>
<span class="t" style="font-size:16px;font-weight:400;color:#1c1c1c;top:470px;left:-47.00px;width:1000px;text-align:center;">N</span>
<span class="t" style="font-size:16px;font-weight:400;color:#1c1c1c;top:470px;transform:scaleX(0.903);transform-origin:50% 0;left:27.50px;width:1000px;text-align:center;">SN</span>
<span class="t" style="font-size:16px;font-weight:400;color:#1c1c1c;top:470px;transform:scaleX(0.9503);transform-origin:0 0;left:576.00px;">27-08-20...</span>
<span class="t" style="font-size:16px;font-weight:400;color:#1c1c1c;top:470px;transform:scaleX(0.8762);transform-origin:0 0;left:662.00px;">KP 3/CENTR...</span>
<span class="t" style="font-size:16px;font-weight:400;color:#1c1c1c;top:470px;transform:scaleX(0.9541);transform-origin:0 0;left:768.50px;">Zapłata na fakture F...</span>
<span class="t" style="font-size:16px;font-weight:400;color:#1c1c1c;top:470px;transform:scaleX(0.9321);transform-origin:0 0;left:929.60px;">Jan Duda</span>
<span class="t" style="font-size:16px;font-weight:400;color:#1c1c1c;top:470px;transform:scaleX(0.9582);transform-origin:100% 0;right:441.70px;">-453,00</span>
<span class="t" style="font-size:16px;font-weight:400;color:#1c1c1c;top:470px;left:1131.00px;width:1000px;text-align:center;">Z</span>
<span class="t" style="font-size:16px;font-weight:400;color:#1c1c1c;top:470px;transform:scaleX(0.8973);transform-origin:0 0;left:1658.00px;">PLN</span>
<span class="t" style="font-size:16px;font-weight:400;color:#1c1c1c;top:500px;left:-47.00px;width:1000px;text-align:center;">N</span>
<span class="t" style="font-size:16px;font-weight:400;color:#1c1c1c;top:500px;transform:scaleX(0.903);transform-origin:50% 0;left:27.50px;width:1000px;text-align:center;">SN</span>
<span class="t" style="font-size:16px;font-weight:400;color:#1c1c1c;top:500px;transform:scaleX(0.9503);transform-origin:0 0;left:576.00px;">27-08-20...</span>
<span class="t" style="font-size:16px;font-weight:400;color:#1c1c1c;top:500px;transform:scaleX(0.8762);transform-origin:0 0;left:662.00px;">KP 4/CENTR...</span>
<span class="t" style="font-size:16px;font-weight:400;color:#1c1c1c;top:500px;transform:scaleX(0.9366);transform-origin:0 0;left:768.50px;">Zaliczka na zamówi...</span>
<span class="t" style="font-size:16px;font-weight:400;color:#1c1c1c;top:500px;transform:scaleX(0.8656);transform-origin:0 0;left:929.60px;">ABC s.c.</span>
<span class="t" style="font-size:16px;font-weight:400;color:#1c1c1c;top:500px;transform:scaleX(0.9842);transform-origin:0 0;left:1036.50px;">456-46-55</span>
<span class="t" style="font-size:16px;font-weight:400;color:#1c1c1c;top:500px;transform:scaleX(0.9582);transform-origin:100% 0;right:441.70px;">-543,00</span>
<span class="t" style="font-size:16px;font-weight:400;color:#1c1c1c;top:500px;left:1131.00px;width:1000px;text-align:center;">Z</span>
<span class="t" style="font-size:16px;font-weight:400;color:#1c1c1c;top:500px;transform:scaleX(0.8973);transform-origin:0 0;left:1658.00px;">PLN</span>
<span class="t" style="font-size:16px;font-weight:400;color:#1c1c1c;top:530px;left:-47.00px;width:1000px;text-align:center;">N</span>
<span class="t" style="font-size:16px;font-weight:400;color:#1c1c1c;top:530px;transform:scaleX(0.903);transform-origin:50% 0;left:27.50px;width:1000px;text-align:center;">SN</span>
<span class="t" style="font-size:16px;font-weight:400;color:#1c1c1c;top:530px;transform:scaleX(0.9503);transform-origin:0 0;left:576.00px;">27-08-20...</span>
<span class="t" style="font-size:16px;font-weight:400;color:#1c1c1c;top:530px;transform:scaleX(0.8829);transform-origin:0 0;left:662.00px;">KP 2/OUTLE...</span>
<span class="t" style="font-size:16px;font-weight:400;color:#1c1c1c;top:530px;transform:scaleX(0.9366);transform-origin:0 0;left:768.50px;">Zaliczka na zamówi...</span>
<span class="t" style="font-size:16px;font-weight:400;color:#1c1c1c;top:530px;transform:scaleX(0.9307);transform-origin:0 0;left:929.60px;">AD-MAR s.c.</span>
<span class="t" style="font-size:16px;font-weight:400;color:#1c1c1c;top:530px;transform:scaleX(0.9842);transform-origin:0 0;left:1036.50px;">327-54-55</span>
<span class="t" style="font-size:16px;font-weight:400;color:#1c1c1c;top:530px;transform:scaleX(0.9579);transform-origin:100% 0;right:441.70px;">-1 650,00</span>
<span class="t" style="font-size:16px;font-weight:400;color:#1c1c1c;top:530px;left:1131.00px;width:1000px;text-align:center;">Z</span>
<span class="t" style="font-size:16px;font-weight:400;color:#1c1c1c;top:530px;transform:scaleX(0.8973);transform-origin:0 0;left:1658.00px;">PLN</span>
<span class="t" style="font-size:16px;font-weight:400;color:#1c1c1c;top:560px;left:-47.00px;width:1000px;text-align:center;">N</span>
<span class="t" style="font-size:16px;font-weight:400;color:#1c1c1c;top:560px;transform:scaleX(0.8452);transform-origin:50% 0;left:27.50px;width:1000px;text-align:center;">SZ</span>
<span class="t" style="font-size:16px;font-weight:400;color:#1c1c1c;top:560px;transform:scaleX(0.9503);transform-origin:0 0;left:576.00px;">27-08-20...</span>
<span class="t" style="font-size:16px;font-weight:400;color:#1c1c1c;top:560px;transform:scaleX(0.9173);transform-origin:0 0;left:662.00px;">KW 1/CENT...</span>
<span class="t" style="font-size:16px;font-weight:400;color:#1c1c1c;top:560px;transform:scaleX(0.9541);transform-origin:0 0;left:768.50px;">Zapłata na fakture F...</span>
<span class="t" style="font-size:16px;font-weight:400;color:#1c1c1c;top:560px;transform:scaleX(0.971);transform-origin:0 0;left:929.60px;">Hurtownia T...</span>
<span class="t" style="font-size:16px;font-weight:400;color:#1c1c1c;top:560px;transform:scaleX(0.9842);transform-origin:0 0;left:1036.50px;">343-62-63</span>
<span class="t" style="font-size:16px;font-weight:400;color:#1c1c1c;top:560px;transform:scaleX(0.9579);transform-origin:100% 0;right:312.80px;">-3 658,00</span>
<span class="t" style="font-size:16px;font-weight:400;color:#1c1c1c;top:560px;left:1131.00px;width:1000px;text-align:center;">N</span>
<span class="t" style="font-size:16px;font-weight:400;color:#1c1c1c;top:560px;transform:scaleX(0.8973);transform-origin:0 0;left:1658.00px;">PLN</span>
<span class="t" style="font-size:16px;font-weight:400;color:#1c1c1c;top:590px;left:-47.00px;width:1000px;text-align:center;">R</span>
<span class="t" style="font-size:16px;font-weight:400;color:#1c1c1c;top:590px;transform:scaleX(0.8452);transform-origin:50% 0;left:27.50px;width:1000px;text-align:center;">SZ</span>
<span class="t" style="font-size:16px;font-weight:400;color:#1c1c1c;top:590px;transform:scaleX(0.9503);transform-origin:0 0;left:576.00px;">27-08-20...</span>
<span class="t" style="font-size:16px;font-weight:400;color:#1c1c1c;top:590px;transform:scaleX(0.9173);transform-origin:0 0;left:662.00px;">KW 4/CENT...</span>
<span class="t" style="font-size:16px;font-weight:400;letter-spacing:-0.069px;color:#1c1c1c;top:590px;left:768.50px;">FZ 12/MM/2023</span>
<span class="t" style="font-size:16px;font-weight:400;color:#1c1c1c;top:590px;transform:scaleX(0.9625);transform-origin:0 0;left:929.60px;">Hurtownia...</span>
<span class="t" style="font-size:16px;font-weight:400;color:#1c1c1c;top:590px;transform:scaleX(0.9842);transform-origin:0 0;left:1036.50px;">356-46-24</span>
<span class="t" style="font-size:16px;font-weight:400;color:#1c1c1c;top:590px;transform:scaleX(0.957);transform-origin:100% 0;right:312.80px;">-25 982,51</span>
<span class="t" style="font-size:16px;font-weight:400;color:#1c1c1c;top:590px;left:1131.00px;width:1000px;text-align:center;">N</span>
<span class="t" style="font-size:16px;font-weight:400;color:#1c1c1c;top:590px;transform:scaleX(0.8973);transform-origin:0 0;left:1658.00px;">PLN</span>
<span class="t" style="font-size:16px;font-weight:400;color:#1c1c1c;top:620px;left:-47.00px;width:1000px;text-align:center;">R</span>
<span class="t" style="font-size:16px;font-weight:400;color:#1c1c1c;top:620px;left:27.50px;width:1000px;text-align:center;">Z</span>
<span class="t" style="font-size:16px;font-weight:400;color:#1c1c1c;top:620px;transform:scaleX(0.9503);transform-origin:0 0;left:576.00px;">27-08-20...</span>
<span class="t" style="font-size:16px;font-weight:400;color:#1c1c1c;top:620px;transform:scaleX(0.8766);transform-origin:0 0;left:662.00px;">FZ 1/CENTR...</span>
<span class="t" style="font-size:16px;font-weight:400;color:#1c1c1c;top:620px;transform:scaleX(0.9625);transform-origin:0 0;left:929.60px;">Hurtownia...</span>
<span class="t" style="font-size:16px;font-weight:400;color:#1c1c1c;top:620px;transform:scaleX(0.9842);transform-origin:0 0;left:1036.50px;">356-46-24</span>
<span class="t" style="font-size:16px;font-weight:400;color:#1c1c1c;top:620px;transform:scaleX(0.9503);transform-origin:0 0;left:1143.00px;">27-08-20...</span>
<span class="t" style="font-size:16px;font-weight:400;color:#1c1c1c;top:620px;transform:scaleX(0.9404);transform-origin:100% 0;right:312.80px;">25 982,51</span>
<span class="t" style="font-size:16px;font-weight:400;color:#1c1c1c;top:620px;left:1131.00px;width:1000px;text-align:center;">Z</span>
<span class="t" style="font-size:16px;font-weight:400;color:#1c1c1c;top:620px;transform:scaleX(0.8973);transform-origin:0 0;left:1658.00px;">PLN</span>
<span class="t" style="font-size:16px;font-weight:400;color:#f01515;top:650px;transform:scaleX(0.9149);transform-origin:50% 0;left:-47.00px;width:1000px;text-align:center;">C*</span>
<span class="t" style="font-size:16px;font-weight:400;color:#f01515;top:650px;left:27.50px;width:1000px;text-align:center;">Z</span>
<span class="t" style="font-size:16px;font-weight:400;color:#f01515;top:650px;transform:scaleX(0.9503);transform-origin:0 0;left:576.00px;">27-08-20...</span>
<span class="t" style="font-size:16px;font-weight:400;color:#f01515;top:650px;transform:scaleX(0.8975);transform-origin:0 0;left:662.00px;">FZ 1/GALAX...</span>
<span class="t" style="font-size:16px;font-weight:400;color:#f01515;top:650px;transform:scaleX(0.9625);transform-origin:0 0;left:929.60px;">Hurtownia...</span>
<span class="t" style="font-size:16px;font-weight:400;color:#f01515;top:650px;transform:scaleX(0.9842);transform-origin:0 0;left:1036.50px;">356-46-24</span>
<span class="t" style="font-size:16px;font-weight:400;color:#f01515;top:650px;transform:scaleX(0.9503);transform-origin:0 0;left:1143.00px;">03-09-20...</span>
<span class="t" style="font-size:16px;font-weight:400;color:#f01515;top:650px;transform:scaleX(0.9511);transform-origin:100% 0;right:570.50px;">32</span>
<span class="t" style="font-size:16px;font-weight:400;color:#f01515;top:650px;transform:scaleX(0.9404);transform-origin:100% 0;right:312.80px;">84 731,22</span>
<span class="t" style="font-size:16px;font-weight:400;color:#f01515;top:650px;left:1131.00px;width:1000px;text-align:center;">Z</span>
<span class="t" style="font-size:16px;font-weight:400;color:#f01515;top:650px;transform:scaleX(0.8973);transform-origin:0 0;left:1658.00px;">PLN</span>
<span class="t" style="font-size:16px;font-weight:400;color:#1c1c1c;top:680px;left:-47.00px;width:1000px;text-align:center;">R</span>
<span class="t" style="font-size:16px;font-weight:400;color:#1c1c1c;top:680px;transform:scaleX(0.903);transform-origin:50% 0;left:27.50px;width:1000px;text-align:center;">SN</span>
<span class="t" style="font-size:16px;font-weight:400;color:#1c1c1c;top:680px;transform:scaleX(0.9503);transform-origin:0 0;left:576.00px;">06-09-20...</span>
<span class="t" style="font-size:16px;font-weight:400;color:#1c1c1c;top:680px;transform:scaleX(0.95);transform-origin:0 0;left:662.00px;">Karta płatni...</span>
<span class="t" style="font-size:16px;font-weight:400;color:#1c1c1c;top:680px;transform:scaleX(0.9137);transform-origin:0 0;left:768.50px;">FS 1/CENTRALA/2023</span>
<span class="t" style="font-size:16px;font-weight:400;color:#1c1c1c;top:680px;transform:scaleX(0.9443);transform-origin:0 0;left:929.60px;">Drogeria AL...</span>
<span class="t" style="font-size:16px;font-weight:400;color:#1c1c1c;top:680px;transform:scaleX(0.9842);transform-origin:0 0;left:1036.50px;">331-21-42</span>
<span class="t" style="font-size:16px;font-weight:400;color:#1c1c1c;top:680px;transform:scaleX(0.957);transform-origin:100% 0;right:441.70px;">-21 425,46</span>
<span class="t" style="font-size:16px;font-weight:400;color:#1c1c1c;top:680px;left:1131.00px;width:1000px;text-align:center;">Z</span>
<span class="t" style="font-size:16px;font-weight:400;color:#1c1c1c;top:680px;transform:scaleX(0.8973);transform-origin:0 0;left:1658.00px;">PLN</span>
<span class="t" style="font-size:16px;font-weight:400;color:#f01515;top:709px;left:-47.00px;width:1000px;text-align:center;">N</span>
<span class="t" style="font-size:16px;font-weight:400;color:#f01515;top:709px;left:27.50px;width:1000px;text-align:center;">N</span>
<span class="t" style="font-size:16px;font-weight:400;color:#f01515;top:709px;transform:scaleX(0.9503);transform-origin:0 0;left:576.00px;">06-09-20...</span>
<span class="t" style="font-size:16px;font-weight:400;color:#f01515;top:709px;transform:scaleX(0.8633);transform-origin:0 0;left:662.00px;">FS 1/CENTR...</span>
<span class="t" style="font-size:16px;font-weight:400;color:#f01515;top:709px;transform:scaleX(0.9151);transform-origin:0 0;left:929.60px;">InsCard SA</span>
<span class="t" style="font-size:16px;font-weight:400;color:#f01515;top:709px;transform:scaleX(0.9318);transform-origin:0 0;left:1036.50px;">(022) 515-3...</span>
<span class="t" style="font-size:16px;font-weight:400;color:#f01515;top:709px;transform:scaleX(0.9503);transform-origin:0 0;left:1143.00px;">12-09-20...</span>
<span class="t" style="font-size:16px;font-weight:400;color:#f01515;top:709px;transform:scaleX(0.9511);transform-origin:100% 0;right:570.50px;">23</span>
<span class="t" style="font-size:16px;font-weight:400;color:#f01515;top:709px;transform:scaleX(0.9404);transform-origin:100% 0;right:441.70px;">21 425,46</span>
<span class="t" style="font-size:16px;font-weight:400;color:#f01515;top:709px;left:1131.00px;width:1000px;text-align:center;">N</span>
<span class="t" style="font-size:16px;font-weight:400;color:#f01515;top:709px;transform:scaleX(0.8973);transform-origin:0 0;left:1658.00px;">PLN</span>
<span class="t" style="font-size:16px;font-weight:400;color:#1c1c1c;top:739px;left:-47.00px;width:1000px;text-align:center;">R</span>
<span class="t" style="font-size:16px;font-weight:400;color:#1c1c1c;top:739px;left:27.50px;width:1000px;text-align:center;">N</span>
<span class="t" style="font-size:16px;font-weight:400;color:#1c1c1c;top:739px;transform:scaleX(0.9503);transform-origin:0 0;left:576.00px;">06-09-20...</span>
<span class="t" style="font-size:16px;font-weight:400;color:#1c1c1c;top:739px;transform:scaleX(0.8633);transform-origin:0 0;left:662.00px;">FS 1/CENTR...</span>
<span class="t" style="font-size:16px;font-weight:400;color:#1c1c1c;top:739px;transform:scaleX(0.9443);transform-origin:0 0;left:929.60px;">Drogeria AL...</span>
<span class="t" style="font-size:16px;font-weight:400;color:#1c1c1c;top:739px;transform:scaleX(0.9842);transform-origin:0 0;left:1036.50px;">331-21-42</span>
<span class="t" style="font-size:16px;font-weight:400;color:#1c1c1c;top:739px;transform:scaleX(0.9503);transform-origin:0 0;left:1143.00px;">06-09-20...</span>
<span class="t" style="font-size:16px;font-weight:400;color:#1c1c1c;top:739px;transform:scaleX(0.9404);transform-origin:100% 0;right:441.70px;">21 425,46</span>
<span class="t" style="font-size:16px;font-weight:400;color:#1c1c1c;top:739px;left:1131.00px;width:1000px;text-align:center;">N</span>
<span class="t" style="font-size:16px;font-weight:400;color:#1c1c1c;top:739px;transform:scaleX(0.8973);transform-origin:0 0;left:1658.00px;">PLN</span>
<span class="t" style="font-size:16px;font-weight:400;color:#f01515;top:769px;left:-47.00px;width:1000px;text-align:center;">N</span>
<span class="t" style="font-size:16px;font-weight:400;color:#f01515;top:769px;left:27.50px;width:1000px;text-align:center;">N</span>
<span class="t" style="font-size:16px;font-weight:400;color:#f01515;top:769px;transform:scaleX(0.9503);transform-origin:0 0;left:576.00px;">06-09-20...</span>
<span class="t" style="font-size:16px;font-weight:400;color:#f01515;top:769px;transform:scaleX(0.8633);transform-origin:0 0;left:662.00px;">FS 2/CENTR...</span>
<span class="t" style="font-size:16px;font-weight:400;color:#f01515;top:769px;transform:scaleX(0.9105);transform-origin:0 0;left:929.60px;">Kiosk ARTUR</span>
<span class="t" style="font-size:16px;font-weight:400;color:#f01515;top:769px;transform:scaleX(0.9842);transform-origin:0 0;left:1036.50px;">333-53-64</span>
<span class="t" style="font-size:16px;font-weight:400;color:#f01515;top:769px;transform:scaleX(0.9503);transform-origin:0 0;left:1143.00px;">13-09-20...</span>
<span class="t" style="font-size:16px;font-weight:400;color:#f01515;top:769px;transform:scaleX(0.9511);transform-origin:100% 0;right:570.50px;">22</span>
<span class="t" style="font-size:16px;font-weight:400;color:#f01515;top:769px;transform:scaleX(0.939);transform-origin:100% 0;right:441.70px;">5 294,53</span>
<span class="t" style="font-size:16px;font-weight:400;color:#f01515;top:769px;left:1131.00px;width:1000px;text-align:center;">N</span>
<span class="t" style="font-size:16px;font-weight:400;color:#f01515;top:769px;transform:scaleX(0.8973);transform-origin:0 0;left:1658.00px;">PLN</span>
<span class="t" style="font-size:16px;font-weight:400;color:#f01515;top:769px;transform:scaleX(0.9407);transform-origin:0 0;left:1725.00px;">Odzyskaj pieni...</span>
<span class="t" style="font-size:16px;font-weight:400;color:#1c1c1c;top:799px;left:-47.00px;width:1000px;text-align:center;">R</span>
<span class="t" style="font-size:16px;font-weight:400;color:#1c1c1c;top:799px;transform:scaleX(0.903);transform-origin:50% 0;left:27.50px;width:1000px;text-align:center;">SN</span>
<span class="t" style="font-size:16px;font-weight:400;color:#1c1c1c;top:799px;transform:scaleX(0.9503);transform-origin:0 0;left:576.00px;">06-09-20...</span>
<span class="t" style="font-size:16px;font-weight:400;color:#1c1c1c;top:799px;transform:scaleX(0.8762);transform-origin:0 0;left:662.00px;">KP 6/CENTR...</span>
<span class="t" style="font-size:16px;font-weight:400;color:#1c1c1c;top:799px;transform:scaleX(0.9427);transform-origin:0 0;left:768.50px;">PA 1/OUTLET/2023</span>
<span class="t" style="font-size:16px;font-weight:400;color:#1c1c1c;top:799px;transform:scaleX(0.9579);transform-origin:100% 0;right:441.70px;">-1 568,58</span>
<span class="t" style="font-size:16px;font-weight:400;color:#1c1c1c;top:799px;left:1131.00px;width:1000px;text-align:center;">Z</span>
<span class="t" style="font-size:16px;font-weight:400;color:#1c1c1c;top:799px;transform:scaleX(0.8973);transform-origin:0 0;left:1658.00px;">PLN</span>
<span class="t" style="font-size:16px;font-weight:400;color:#1c1c1c;top:829px;left:-47.00px;width:1000px;text-align:center;">R</span>
<span class="t" style="font-size:16px;font-weight:400;color:#1c1c1c;top:829px;left:27.50px;width:1000px;text-align:center;">N</span>
<span class="t" style="font-size:16px;font-weight:400;color:#1c1c1c;top:829px;transform:scaleX(0.9503);transform-origin:0 0;left:576.00px;">06-09-20...</span>
<span class="t" style="font-size:16px;font-weight:400;color:#1c1c1c;top:829px;transform:scaleX(0.9079);transform-origin:0 0;left:662.00px;">PA 1/OUTLE...</span>
<span class="t" style="font-size:16px;font-weight:400;color:#1c1c1c;top:829px;transform:scaleX(0.9503);transform-origin:0 0;left:1143.00px;">06-09-20...</span>
<span class="t" style="font-size:16px;font-weight:400;color:#1c1c1c;top:829px;transform:scaleX(0.939);transform-origin:100% 0;right:441.70px;">1 568,58</span>
<span class="t" style="font-size:16px;font-weight:400;color:#1c1c1c;top:829px;left:1131.00px;width:1000px;text-align:center;">N</span>
<span class="t" style="font-size:16px;font-weight:400;color:#1c1c1c;top:829px;transform:scaleX(0.8973);transform-origin:0 0;left:1658.00px;">PLN</span>
<span class="t" style="font-size:16px;font-weight:400;color:#1c1c1c;top:859px;left:-47.00px;width:1000px;text-align:center;">R</span>
<span class="t" style="font-size:16px;font-weight:400;color:#1c1c1c;top:859px;transform:scaleX(0.903);transform-origin:50% 0;left:27.50px;width:1000px;text-align:center;">SN</span>
<span class="t" style="font-size:16px;font-weight:400;color:#1c1c1c;top:859px;transform:scaleX(0.9503);transform-origin:0 0;left:576.00px;">06-09-20...</span>
<span class="t" style="font-size:16px;font-weight:400;color:#1c1c1c;top:859px;transform:scaleX(0.8762);transform-origin:0 0;left:662.00px;">KP 7/CENTR...</span>
<span class="t" style="font-size:16px;font-weight:400;color:#1c1c1c;top:859px;transform:scaleX(0.9427);transform-origin:0 0;left:768.50px;">PA 2/OUTLET/2023</span>
<span class="t" style="font-size:16px;font-weight:400;color:#1c1c1c;top:859px;transform:scaleX(0.9595);transform-origin:100% 0;right:441.70px;">-49,14</span>
<span class="t" style="font-size:16px;font-weight:400;color:#1c1c1c;top:859px;left:1131.00px;width:1000px;text-align:center;">Z</span>
<span class="t" style="font-size:16px;font-weight:400;color:#1c1c1c;top:859px;transform:scaleX(0.8973);transform-origin:0 0;left:1658.00px;">PLN</span>
<span class="t" style="font-size:16px;font-weight:400;color:#ffffff;top:885px;transform:scaleX(0.9564);transform-origin:100% 0;right:443.60px;">32 595,11</span>
<span class="t" style="font-size:16px;font-weight:400;color:#ffffff;top:885px;transform:scaleX(0.9404);transform-origin:100% 0;right:313.80px;">69 773,22</span>
</div>
<div class="L">
<div style="left:1542px;top:99px;width:369.5px;height:89px;background:#ffffff;border:1px solid #2a9fe0;box-shadow:2px 3px 4px rgba(0,0,0,0.4);"></div>
<svg style="left:1564.1px;top:116px" width="1" height="1" viewBox="0 0 1 1"><g fill="none" stroke="#1583c6" stroke-width="1.8"><circle cx="0" cy="0" r="5.2"/></g><g fill="#1583c6"><path transform="rotate(0)" d="M-1.7 -5.6 L-1.100 -9.1 L1.100 -9.1 L1.700 -5.6 Z"/><path transform="rotate(45)" d="M-1.7 -5.6 L-1.100 -9.1 L1.100 -9.1 L1.700 -5.6 Z"/><path transform="rotate(90)" d="M-1.7 -5.6 L-1.100 -9.1 L1.100 -9.1 L1.700 -5.6 Z"/><path transform="rotate(135)" d="M-1.7 -5.6 L-1.100 -9.1 L1.100 -9.1 L1.700 -5.6 Z"/><path transform="rotate(180)" d="M-1.7 -5.6 L-1.100 -9.1 L1.100 -9.1 L1.700 -5.6 Z"/><path transform="rotate(225)" d="M-1.7 -5.6 L-1.100 -9.1 L1.100 -9.1 L1.700 -5.6 Z"/><path transform="rotate(270)" d="M-1.7 -5.6 L-1.100 -9.1 L1.100 -9.1 L1.700 -5.6 Z"/><path transform="rotate(315)" d="M-1.7 -5.6 L-1.100 -9.1 L1.100 -9.1 L1.700 -5.6 Z"/></g></svg>
<svg style="left:1892.500px;top:169px" width="7" height="10" viewBox="0 0 7 10"><path d="M1 1 L5 5 L1 9" fill="none" stroke="#222" stroke-width="1.700"/></svg>
<div style="left:1542.9px;top:131.4px;width:367px;height:27.2px;border:2px solid #f01818;border-radius:6px;box-shadow:0 1px 3px rgba(0,0,0,0.35), inset 0 0 4px rgba(0,0,0,0.28);"></div>
</div>
<div class="L">
<span class="t" style="font-size:16px;font-weight:400;color:#151515;top:110px;transform:scaleX(0.9741);transform-origin:0 0;left:1590.40px;">Konfiguracja finansów</span>
<span class="t" style="font-size:16px;font-weight:400;letter-spacing:0.067px;color:#151515;top:110px;left:1799.50px;">Ctrl+Shift+K</span>
<span class="t" style="font-size:16px;font-weight:400;color:#151515;top:139px;transform:scaleX(0.9672);transform-origin:0 0;left:1590.40px;">Konfiguracja widoku</span>
<span class="t" style="font-size:16px;font-weight:400;letter-spacing:0.047px;color:#151515;top:139px;left:1799.50px;">Ctrl+Shift+L</span>
<span class="t" style="font-size:16px;font-weight:400;color:#151515;top:168px;transform:scaleX(0.9695);transform-origin:0 0;left:1590.40px;">Pokaż/ukryj widoki</span>
</div>
<div class="L">
<svg style="left:0;top:0" width="1917" height="907" viewBox="0 0 1917 907"><path d="M1700 87.100 L1768 71.900 L1767 66.800 L1793.300 74.200 L1769.200 90.300 L1770.700 84.200 L1700 88.600 Z" fill="#fc0303" style="filter:drop-shadow(0 1.500px 1.500px rgba(70,0,0,0.45))"/></svg>
<div style="left:1682.9px;top:53.1px;width:35.2px;height:35.2px;box-sizing:border-box;border-radius:50%;background:rgba(221,40,46,0.96);border:1.5px solid rgba(246,30,30,0.92);box-shadow:0 1px 4px rgba(110,0,0,0.5);"></div>
<div style="left:1709.0px;top:93.0px;width:35.2px;height:35.2px;box-sizing:border-box;border-radius:50%;background:rgba(221,40,46,0.87);border:1.5px solid rgba(246,30,30,0.92);box-shadow:0 1px 4px rgba(110,0,0,0.5);"></div>
<div style="left:6px;top:346px;width:140px;height:56px;-webkit-mask-image:linear-gradient(90deg,transparent 0,transparent 10px,#000 70px);mask-image:linear-gradient(90deg,transparent 0,transparent 10px,#000 70px);"><div style="left:0px;top:11px;width:121.500px;height:32.500px;border-radius:5px;background:rgba(224,186,186,0.6);box-shadow:0 2px 4px rgba(150,60,60,0.30);"></div></div>
<svg style="left:16px;top:356px" width="118" height="36" viewBox="0 0 118 36"><defs><linearGradient id="lg1" gradientUnits="userSpaceOnUse" x1="0" x2="118" y1="0" y2="0"><stop offset="0" stop-color="#f02828" stop-opacity="0"/><stop offset="0.5" stop-color="#f02828" stop-opacity="1"/></linearGradient></defs><path d="M0 1 H106 Q111.600 1 111.600 6.500 V13 L115.800 17.300 L111.600 21.600 V28.200 Q111.600 33.700 106 33.700 H0" fill="none" stroke="url(#lg1)" stroke-width="2"/></svg>
<div style="left:135.9px;top:355.09999999999997px;width:35.2px;height:35.2px;box-sizing:border-box;border-radius:50%;background:rgba(221,40,46,0.96);border:1.5px solid rgba(246,30,30,0.92);box-shadow:0 1px 4px rgba(110,0,0,0.5);"></div>
</div>
<div class="L">
<span class="t" style="font-size:17.25px;font-weight:400;color:#666;top:363px;transform:scaleX(0.9386);transform-origin:0 0;left:27.70px;">Rozrachunki</span>
<span class="t" style="font-size:17.5px;font-weight:700;color:#fdeaea;top:63px;left:1199.90px;width:1000px;text-align:center;">2</span>
<span class="t" style="font-size:17.5px;font-weight:700;color:#fdeaea;top:102px;left:1226.00px;width:1000px;text-align:center;">3</span>
<span class="t" style="font-size:20px;font-weight:700;color:#fdeaea;top:363px;left:-347.60px;width:1000px;text-align:center;">1</span>
</div>
</body></html>
